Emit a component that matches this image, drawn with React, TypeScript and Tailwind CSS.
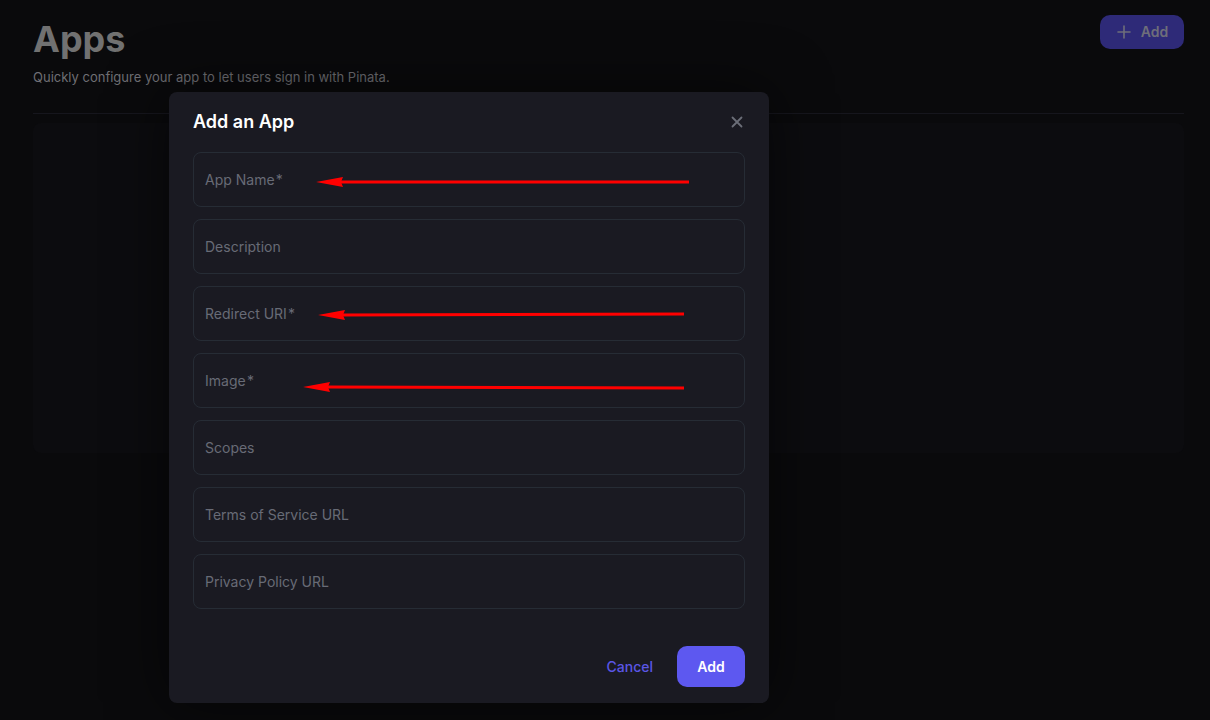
import React from "react";

const fields = [
  "App Name\u200A*",
  "Description",
  "Redirect URI\u200A*",
  "Image\u200A*",
  "Scopes",
  "Terms of Service URL",
  "Privacy Policy URL",
];

function Arrow({ x1, y1, x2, y2 }: { x1: number; y1: number; x2: number; y2: number }) {
  // x1,y1 = tip ; x2,y2 = tail
  return (
    <g>
      <line x1={x1 + 24} y1={y1} x2={x2} y2={y2} stroke="#ff0000" strokeWidth={3} />
      <polygon points={`${x1},${y1} ${x1 + 27},${y1 - 5} ${x1 + 25},${y1} ${x1 + 27},${y1 + 5}`} fill="#ff0000" />
    </g>
  );
}

export default function App() {
  return (
    <div className="relative min-h-[720px] bg-[#0a0a0c] font-['Inter',sans-serif]">
      {/* page behind the modal */}
      <div className="pl-[33px] pr-[26px] pt-[15px]">
        <div className="flex items-start justify-between">
          <h1 className="mt-[4px] text-4xl font-bold text-[#717171]">Apps</h1>
          <button className="flex h-[34px] w-[84px] items-center justify-center gap-[9px] rounded-[10px] bg-[#2e2a78] text-sm font-semibold text-[#6e6e7a]">
            <svg width="16" height="16" viewBox="0 0 16 16" fill="none" stroke="currentColor" strokeWidth="1.6" strokeLinecap="round">
              <path d="M8 2v12M2 8h12" />
            </svg>
            Add
          </button>
        </div>
        <p className="mt-[8px] text-[13px] leading-5 text-[#6f6f74]">Quickly configure your app to let users sign in with Pinata.</p>
        <div className="mt-[26px] h-px bg-[#16161d]" />
        <div className="mt-[9px] h-[330px] rounded-lg bg-[#0c0c0f]" />
      </div>

      {/* modal */}
      <div className="absolute inset-0 pl-[169px] pt-[92px]">
        <div className="flex w-[600px] flex-col rounded-lg bg-[#1a1a22] px-6 pb-4 pt-4 shadow-[0_0_60px_rgba(0,0,0,0.6)]">
          <div className="flex items-center justify-between">
            <h2 className="text-lg leading-7 font-semibold text-white">Add an App</h2>
            <svg width="12" height="12" viewBox="0 0 12 12" className="mr-[2px]" stroke="#6b6e78" strokeWidth="1.8" strokeLinecap="round">
              <path d="M1.5 1.5l9 9M10.5 1.5l-9 9" />
            </svg>
          </div>
          <div className="mt-4 flex flex-col gap-3">
            {fields.map((f) => (
              <input
                key={f}
                placeholder={f}
                className="h-[55px] w-full rounded-lg border border-[#262c35] bg-transparent px-[11px] text-sm text-white outline-none placeholder:text-[#686b76]"
              />
            ))}
          </div>
          <div className="mt-[37px] flex items-center justify-end gap-6">
            <button className="text-sm font-medium text-[#5a56e6]">Cancel</button>
            <button className="h-[41px] w-[68px] rounded-[10px] bg-[#5d58f0] text-sm font-semibold text-white">Add</button>
          </div>
        </div>
      </div>

      {/* annotation arrows */}
      <svg className="pointer-events-none absolute inset-0" width="1210" height="720">
        <Arrow x1={316} y1={182} x2={689} y2={182} />
        <Arrow x1={318} y1={315} x2={684} y2={314} />
        <Arrow x1={303} y1={387} x2={684} y2={388} />
      </svg>
    </div>
  );
}
